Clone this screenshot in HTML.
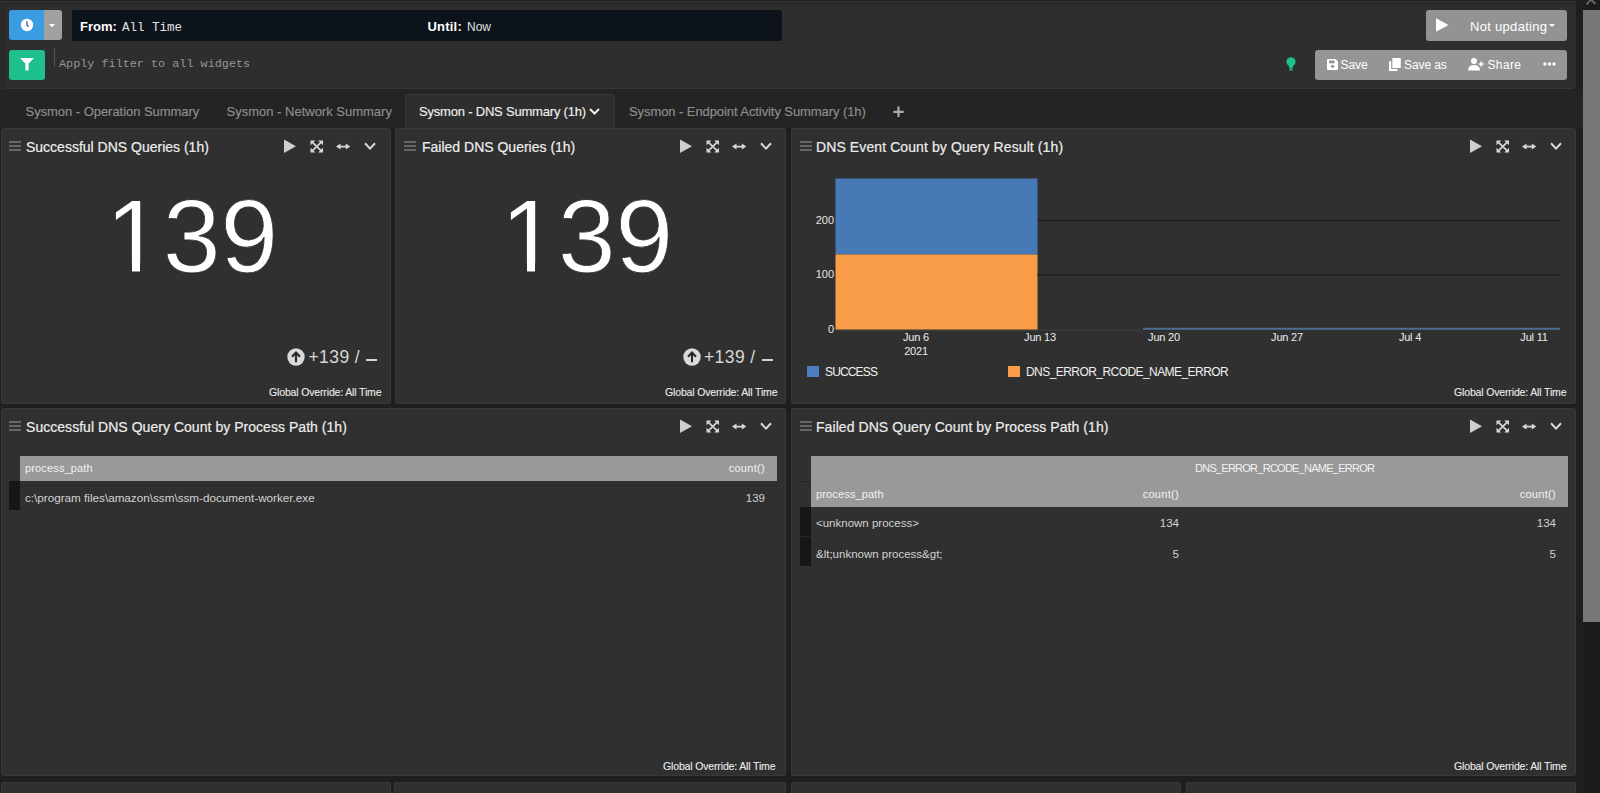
<!DOCTYPE html>
<html><head><meta charset="utf-8">
<style>
*{box-sizing:border-box;margin:0;padding:0}
html,body{width:1600px;height:793px;overflow:hidden;background:#1f1f1f;font-family:"Liberation Sans",sans-serif;color:#e6e6e6}
.abs{position:absolute;white-space:nowrap}
svg{position:absolute;overflow:visible}
#topframe{position:absolute;left:0;top:0;width:1576px;height:89px;background:#2a2a2a;border-top:1px solid #1e1e1e;border-radius:0 0 4px 0}
#topbar{position:absolute;left:6px;top:5px;width:1570px;height:84px;background:#2e2e2e;border-radius:0 0 4px 0;border-bottom:1.5px solid #363636}
#tabbar{position:absolute;left:0;top:89px;width:1583px;height:39px;background:#242424}
.tab{position:absolute;top:0;height:39px;line-height:45px;font-size:13px;color:#8e8e8e;white-space:nowrap;-webkit-text-stroke:0.15px #8e8e8e}
.tab.active{background:#2e2e2e;border:1px solid #383838;border-bottom:none;top:5px;height:35px;line-height:35px;color:#f0f0f0;border-radius:3px 3px 0 0;-webkit-text-stroke:0.15px #f0f0f0}
.panel{position:absolute;background:#303030;border:1px solid #393939;border-radius:2px}
.ptitle{position:absolute;left:24px;top:10px;font-size:14px;color:#ededed;white-space:nowrap;-webkit-text-stroke:0.2px #ededed}
.ham{position:absolute;left:8px;top:12.25px;width:12px;height:10px}
.ham i{position:absolute;left:0;width:12px;height:2px;background:#666}
.go{position:absolute;font-size:10.5px;color:#ececec;white-space:nowrap;letter-spacing:-0.15px;-webkit-text-stroke:0.1px #ececec}
.big{position:absolute;font-size:103.5px;color:#fff;white-space:nowrap;line-height:1;-webkit-text-stroke:0.8px #303030}
.delta{position:absolute;font-size:17.5px;color:#d6d6d6;white-space:nowrap;letter-spacing:0.4px}
.th{position:absolute;background:#999;}
.tt{position:absolute;font-size:11px;color:#f2f2f2;white-space:nowrap;letter-spacing:0.15px}
.td{position:absolute;font-size:11.5px;color:#d2d2d2;white-space:nowrap}
.xl{font-size:11px;color:#ececec;line-height:13.5px;letter-spacing:-0.2px}
.mark{position:absolute;background:#161616}
#scroll{position:absolute;left:1583px;top:0;width:17px;height:793px;background:#1c1c1c}
#thumb{position:absolute;left:0;top:10px;width:17px;height:612px;background:#787878}
</style></head><body>

<div id="topframe"></div>
<div id="topbar"></div>
<div class="abs" style="left:0;top:1px;width:1576px;height:1px;background:#363636"></div>
<!-- row 1 controls -->
<div class="abs" style="left:9px;top:10px;width:36px;height:30px;background:#3a9de2;border-radius:3px 0 0 3px"></div>
<div class="abs" style="left:44px;top:10px;width:18px;height:30px;background:#a0a0a0;border-radius:0 3px 3px 0"></div>
<svg style="left:20px;top:18px" width="14" height="14" viewBox="0 0 14 14"><circle cx="7" cy="7" r="6.2" fill="#fff"/><path d="M7 3.2V7.3L8.6 8.8" stroke="#3a6d8f" stroke-width="1.4" fill="none"/></svg>
<svg style="left:49px;top:24px" width="6" height="4" viewBox="0 0 6 4"><path d="M0 0H6L3 3.2Z" fill="#fff"/></svg>
<div class="abs" style="left:72px;top:10px;width:710px;height:31px;background:#0d131a;border-radius:2px"></div>
<div class="abs" style="left:80px;top:18.5px;font-size:13px;font-weight:bold;color:#fff">From:</div>
<div class="abs" style="left:122px;top:20.75px;font-family:'Liberation Mono',monospace;font-size:12.5px;color:#e2e2e2">All Time</div>
<div class="abs" style="left:427.5px;top:18.5px;font-size:13px;letter-spacing:0.2px;font-weight:bold;color:#fff">Until:</div>
<div class="abs" style="left:467px;top:20px;font-size:12px;color:#e2e2e2">Now</div>

<div class="abs" style="left:1426px;top:10px;width:141px;height:31px;background:#939393;border-radius:3px"></div>
<svg style="left:1436px;top:18px" width="13" height="14" viewBox="0 0 13 14"><path d="M0 0.3L12.5 7L0 13.7Z" fill="#fff"/></svg>
<div class="abs" style="left:1470px;top:18.5px;font-size:13px;letter-spacing:0.3px;color:#fff">Not updating</div>
<svg style="left:1549px;top:24px" width="6" height="4" viewBox="0 0 6 4"><path d="M0 0H6L3 3Z" fill="#fff"/></svg>

<!-- row 2 -->
<div class="abs" style="left:9px;top:50px;width:36px;height:30px;background:#1fc08e;border-radius:3px"></div>
<svg style="left:20px;top:57px" width="14" height="14" viewBox="0 0 14 14"><path d="M0 1H14L8.6 6.5V13.5H5.4V6.5Z" fill="#fff"/></svg>
<div class="abs" style="left:54px;top:48px;width:1px;height:19px;background:#555"></div>
<div class="abs" style="left:59px;top:57px;font-family:'Liberation Mono',monospace;font-size:11.8px;color:#969696">Apply filter to all widgets</div>
<svg style="left:1286px;top:57px" width="10" height="14" viewBox="0 0 10 14"><circle cx="5" cy="4.8" r="4.6" fill="#1fbf8c"/><path d="M2.6 8.5H7.4L6.6 11H3.4Z" fill="#1fbf8c"/><rect x="3.4" y="11.5" width="3.2" height="2" fill="#1fbf8c"/></svg>
<div class="abs" style="left:1315px;top:50px;width:252px;height:30px;background:#959595;border-radius:3px"></div>
<svg style="left:1327px;top:59px" width="11" height="11" viewBox="0 0 11 11"><path d="M0 1Q0 0 1 0H8.5L11 2.5V10Q11 11 10 11H1Q0 11 0 10Z" fill="#fff"/><rect x="2" y="1.5" width="5.5" height="2.8" fill="#959595"/><circle cx="5.5" cy="7.3" r="1.6" fill="#959595"/></svg>
<div class="abs" style="left:1340.5px;top:58px;font-size:12px;letter-spacing:-0.1px;color:#fff">Save</div>
<svg style="left:1389px;top:58px" width="12" height="13" viewBox="0 0 12 13"><rect x="3.3" y="0" width="8.5" height="10" fill="#fff"/><path d="M0 3.2H2.2V11H8.5V13H0Z" fill="#fff"/></svg>
<div class="abs" style="left:1404px;top:58px;font-size:12px;letter-spacing:-0.1px;color:#fff">Save as</div>
<svg style="left:1468px;top:58px" width="17" height="13" viewBox="0 0 17 13"><circle cx="6" cy="3" r="3" fill="#fff"/><path d="M0 12.5Q0 7 6 7Q12 7 12 12.5Z" fill="#fff"/><path d="M13.2 3.5V8.5M10.7 6H15.7" stroke="#fff" stroke-width="1.6"/></svg>
<div class="abs" style="left:1487.5px;top:58px;font-size:12px;letter-spacing:0.35px;color:#fff">Share</div>
<svg style="left:1543px;top:62px" width="13" height="4" viewBox="0 0 13 4"><circle cx="1.9" cy="2" r="1.7" fill="#fff"/><circle cx="6.5" cy="2" r="1.7" fill="#fff"/><circle cx="11.1" cy="2" r="1.7" fill="#fff"/></svg>

<div id="tabbar">
  <div class="tab" style="left:25.5px;letter-spacing:-0.04px">Sysmon - Operation Summary</div>
  <div class="tab" style="left:226.5px">Sysmon - Network Summary</div>
  <div class="tab active" style="left:405px;width:210px;padding-left:13px;line-height:34px;letter-spacing:-0.2px">Sysmon - DNS Summary (1h)</div>
  <svg style="left:589px;top:19px" width="11" height="7" viewBox="0 0 11 7"><path d="M1 1L5.5 5.5L10 1" stroke="#f0f0f0" stroke-width="2" fill="none"/></svg>
  <div class="tab" style="left:629px;letter-spacing:-0.08px">Sysmon - Endpoint Activity Summary (1h)</div>
  <svg style="left:893px;top:17px" width="11" height="11" viewBox="0 0 11 11"><path d="M5.5 0.5V11M0.3 5.8H10.7" stroke="#aaaaaa" stroke-width="2.2"/></svg>
</div>

<!-- row 1 panels -->
<div class="panel" style="left:1px;top:128px;width:390px;height:276px">
  <div class="ham" style="left:6.5px"><i style="top:0"></i><i style="top:4px"></i><i style="top:8px"></i></div>
  <div class="ptitle">Successful DNS Queries (1h)</div>
  <svg style="right:12px;top:10px" width="95" height="15" viewBox="0 0 95 15"><path d="M1 0.5L13 7.2L1 14Z" fill="#cfcfcf"/><path d="M28.5 2.4L39 12.6M39 2.4L28.5 12.6" stroke="#d6d6d6" stroke-width="1.7"/><path d="M27.5 1.4H32.3L27.5 6.2ZM40 1.4H35.2L40 6.2ZM27.5 13.6H32.3L27.5 8.8ZM40 13.6H35.2L40 8.8Z" fill="#d6d6d6"/><path d="M55.5 7.6H64.8" stroke="#d6d6d6" stroke-width="1.8"/><path d="M53 7.6L57.5 4.6V10.6ZM67.3 7.6L62.8 4.6V10.6Z" fill="#d6d6d6"/><path d="M82 4.3L87 9.6L92 4.3" stroke="#dcdcdc" stroke-width="2" fill="none"/></svg>
  <div class="big" style="left:103.5px;top:56px">139</div>
  <div class="abs" style="left:108px;top:133.5px;width:22px;height:11px;background:#303030"></div><div class="abs" style="left:138px;top:133.5px;width:20px;height:11px;background:#303030"></div>
  <svg style="left:285px;top:219px" width="18" height="18" viewBox="0 0 18 18"><circle cx="9" cy="9" r="8.7" fill="#dadada"/><path d="M9 14.2V5M5 8.8L9 4.6L13 8.8" stroke="#262626" stroke-width="2.1" fill="none"/></svg>
  <div class="delta" style="left:306.5px;top:218px">+139 / <span style="display:inline-block;width:11px;height:1.6px;background:#d6d6d6;vertical-align:2.5px;margin-left:1px"></span></div>
  <div class="go" style="left:267px;top:257px">Global Override: All Time</div>
</div>
<div class="panel" style="left:395px;top:128px;width:391px;height:276px">
  <div class="ham"><i style="top:0"></i><i style="top:4px"></i><i style="top:8px"></i></div>
  <div class="ptitle" style="left:26px">Failed DNS Queries (1h)</div>
  <svg style="right:11px;top:10px" width="95" height="15" viewBox="0 0 95 15"><path d="M1 0.5L13 7.2L1 14Z" fill="#cfcfcf"/><path d="M28.5 2.4L39 12.6M39 2.4L28.5 12.6" stroke="#d6d6d6" stroke-width="1.7"/><path d="M27.5 1.4H32.3L27.5 6.2ZM40 1.4H35.2L40 6.2ZM27.5 13.6H32.3L27.5 8.8ZM40 13.6H35.2L40 8.8Z" fill="#d6d6d6"/><path d="M55.5 7.6H64.8" stroke="#d6d6d6" stroke-width="1.8"/><path d="M53 7.6L57.5 4.6V10.6ZM67.3 7.6L62.8 4.6V10.6Z" fill="#d6d6d6"/><path d="M82 4.3L87 9.6L92 4.3" stroke="#dcdcdc" stroke-width="2" fill="none"/></svg>
  <div class="big" style="left:104.5px;top:56px">139</div>
  <div class="abs" style="left:109px;top:133.5px;width:22px;height:11px;background:#303030"></div><div class="abs" style="left:139px;top:133.5px;width:20px;height:11px;background:#303030"></div>
  <svg style="left:287px;top:219px" width="18" height="18" viewBox="0 0 18 18"><circle cx="9" cy="9" r="8.7" fill="#dadada"/><path d="M9 14.2V5M5 8.8L9 4.6L13 8.8" stroke="#262626" stroke-width="2.1" fill="none"/></svg>
  <div class="delta" style="left:308px;top:218px">+139 / <span style="display:inline-block;width:11px;height:1.6px;background:#d6d6d6;vertical-align:2.5px;margin-left:1px"></span></div>
  <div class="go" style="left:269px;top:257px">Global Override: All Time</div>
</div>
<div class="panel" style="left:791px;top:128px;width:785px;height:276px">
  <div class="ham"><i style="top:0"></i><i style="top:4px"></i><i style="top:8px"></i></div>
  <div class="ptitle" style="letter-spacing:0.1px">DNS Event Count by Query Result (1h)</div>
  <svg style="left:0;top:0" width="785" height="276" viewBox="0 0 785 276">
    <g transform="translate(-791,-129)">
    <rect x="834.5" y="178.5" width="202" height="76" fill="#4679b5"/>
    <rect x="834.5" y="254.5" width="202" height="75" fill="#f99d48"/>
    <path d="M1036.5 220.5H1559M1036.5 274.8H1559" stroke="#1f1f1f" stroke-width="1.5"/>
    <path d="M834 330.5H1142" stroke="#3c3c3c" stroke-width="1"/>
    <path d="M1142 328.8H1559" stroke="#4d6e93" stroke-width="2"/>
    </g>
  </svg>
  <div class="abs" style="left:23px;top:85px;width:19px;text-align:right;font-size:11px;color:#e4e4e4">200</div>
  <div class="abs" style="left:23px;top:139px;width:19px;text-align:right;font-size:11px;color:#e4e4e4">100</div>
  <div class="abs" style="left:23px;top:194px;width:19px;text-align:right;font-size:11px;color:#e4e4e4">0</div>
  <div class="abs xl" style="left:74px;top:202px;width:100px;text-align:center">Jun 6<br>2021</div>
  <div class="abs xl" style="left:198px;top:202px;width:100px;text-align:center">Jun 13</div>
  <div class="abs xl" style="left:322px;top:202px;width:100px;text-align:center">Jun 20</div>
  <div class="abs xl" style="left:445px;top:202px;width:100px;text-align:center">Jun 27</div>
  <div class="abs xl" style="left:568px;top:202px;width:100px;text-align:center">Jul 4</div>
  <div class="abs xl" style="left:692px;top:202px;width:100px;text-align:center">Jul 11</div>
  <div class="abs" style="left:15px;top:237px;width:12px;height:11px;background:#4a7ec0"></div>
  <div class="abs" style="left:33px;top:236px;font-size:12px;letter-spacing:-0.85px;color:#f0f0f0">SUCCESS</div>
  <div class="abs" style="left:216px;top:237px;width:12px;height:11px;background:#f99d48"></div>
  <div class="abs" style="left:234px;top:236px;font-size:12px;letter-spacing:-0.56px;color:#f0f0f0">DNS_ERROR_RCODE_NAME_ERROR</div>
  <svg style="right:11px;top:10px" width="95" height="15" viewBox="0 0 95 15"><path d="M1 0.5L13 7.2L1 14Z" fill="#cfcfcf"/><path d="M28.5 2.4L39 12.6M39 2.4L28.5 12.6" stroke="#d6d6d6" stroke-width="1.7"/><path d="M27.5 1.4H32.3L27.5 6.2ZM40 1.4H35.2L40 6.2ZM27.5 13.6H32.3L27.5 8.8ZM40 13.6H35.2L40 8.8Z" fill="#d6d6d6"/><path d="M55.5 7.6H64.8" stroke="#d6d6d6" stroke-width="1.8"/><path d="M53 7.6L57.5 4.6V10.6ZM67.3 7.6L62.8 4.6V10.6Z" fill="#d6d6d6"/><path d="M82 4.3L87 9.6L92 4.3" stroke="#dcdcdc" stroke-width="2" fill="none"/></svg>
  <div class="go" style="left:662px;top:257px">Global Override: All Time</div>
</div>
<!-- row 2 -->
<div class="panel" style="left:1px;top:408px;width:785px;height:368px">
  <div class="ham" style="left:6.5px"><i style="top:0"></i><i style="top:4px"></i><i style="top:8px"></i></div>
  <div class="ptitle" style="letter-spacing:0.04px">Successful DNS Query Count by Process Path (1h)</div>
  <div class="th" style="left:18px;top:47px;width:757px;height:25px"></div>
  <div class="tt" style="left:23px;top:53px">process_path</div>
  <div class="tt" style="left:700px;top:53px;width:63px;text-align:right;letter-spacing:0.3px">count()</div>
  <div class="abs" style="left:18px;top:76px;width:758px;height:1px;background:#2a2a2a"></div>
  <div class="mark" style="left:7px;top:72px;width:11px;height:29px"></div>
  <div class="td" style="left:23px;top:82px;font-size:11.7px">c:\program files\amazon\ssm\ssm-document-worker.exe</div>
  <div class="td" style="left:700px;top:83px;width:63px;text-align:right">139</div>
  <svg style="right:11px;top:10px" width="95" height="15" viewBox="0 0 95 15"><path d="M1 0.5L13 7.2L1 14Z" fill="#cfcfcf"/><path d="M28.5 2.4L39 12.6M39 2.4L28.5 12.6" stroke="#d6d6d6" stroke-width="1.7"/><path d="M27.5 1.4H32.3L27.5 6.2ZM40 1.4H35.2L40 6.2ZM27.5 13.6H32.3L27.5 8.8ZM40 13.6H35.2L40 8.8Z" fill="#d6d6d6"/><path d="M55.5 7.6H64.8" stroke="#d6d6d6" stroke-width="1.8"/><path d="M53 7.6L57.5 4.6V10.6ZM67.3 7.6L62.8 4.6V10.6Z" fill="#d6d6d6"/><path d="M82 4.3L87 9.6L92 4.3" stroke="#dcdcdc" stroke-width="2" fill="none"/></svg>
  <div class="go" style="left:661px;top:351px">Global Override: All Time</div>
</div>
<div class="panel" style="left:791px;top:408px;width:785px;height:368px">
  <div class="ham"><i style="top:0"></i><i style="top:4px"></i><i style="top:8px"></i></div>
  <div class="ptitle" style="letter-spacing:0.07px">Failed DNS Query Count by Process Path (1h)</div>
  <div class="th" style="left:19px;top:47px;width:757px;height:51px"></div>
  <div class="tt" style="left:403px;top:53px;letter-spacing:-0.75px">DNS_ERROR_RCODE_NAME_ERROR</div>
  <div class="tt" style="left:24px;top:79px">process_path</div>
  <div class="tt" style="left:325px;top:79px;width:62px;text-align:right;letter-spacing:0.3px">count()</div>
  <div class="tt" style="left:702px;top:79px;width:62px;text-align:right;letter-spacing:0.3px">count()</div>
  <div class="abs" style="left:8px;top:72px;width:11px;height:1px;background:#262626"></div>
  <div class="mark" style="left:8px;top:98px;width:11px;height:59px"></div>
  <div class="abs" style="left:8px;top:127px;width:11px;height:1px;background:#262626"></div>
  <div class="td" style="left:24px;top:108px">&lt;unknown process&gt;</div>
  <div class="td" style="left:325px;top:108px;width:62px;text-align:right">134</div>
  <div class="td" style="left:702px;top:108px;width:62px;text-align:right">134</div>
  <div class="td" style="left:24px;top:139px">&amp;lt;unknown process&amp;gt;</div>
  <div class="td" style="left:325px;top:139px;width:62px;text-align:right">5</div>
  <div class="td" style="left:702px;top:139px;width:62px;text-align:right">5</div>
  <svg style="right:11px;top:10px" width="95" height="15" viewBox="0 0 95 15"><path d="M1 0.5L13 7.2L1 14Z" fill="#cfcfcf"/><path d="M28.5 2.4L39 12.6M39 2.4L28.5 12.6" stroke="#d6d6d6" stroke-width="1.7"/><path d="M27.5 1.4H32.3L27.5 6.2ZM40 1.4H35.2L40 6.2ZM27.5 13.6H32.3L27.5 8.8ZM40 13.6H35.2L40 8.8Z" fill="#d6d6d6"/><path d="M55.5 7.6H64.8" stroke="#d6d6d6" stroke-width="1.8"/><path d="M53 7.6L57.5 4.6V10.6ZM67.3 7.6L62.8 4.6V10.6Z" fill="#d6d6d6"/><path d="M82 4.3L87 9.6L92 4.3" stroke="#dcdcdc" stroke-width="2" fill="none"/></svg>
  <div class="go" style="left:662px;top:351px">Global Override: All Time</div>
</div>
<!-- row 3 -->
<div class="panel" style="left:1px;top:782px;width:390px;height:30px"></div>
<div class="panel" style="left:394px;top:782px;width:392px;height:30px"></div>
<div class="panel" style="left:791px;top:782px;width:390px;height:30px"></div>
<div class="panel" style="left:1186px;top:782px;width:390px;height:30px"></div>

<div id="scroll"><div id="thumb"></div><svg style="left:0;top:0" width="17" height="9" viewBox="0 0 17 9"><path d="M3.5 4.5L8 -0.5L12.5 4" stroke="#6a6a6a" stroke-width="1.8" fill="none"/></svg></div>
</body></html>
